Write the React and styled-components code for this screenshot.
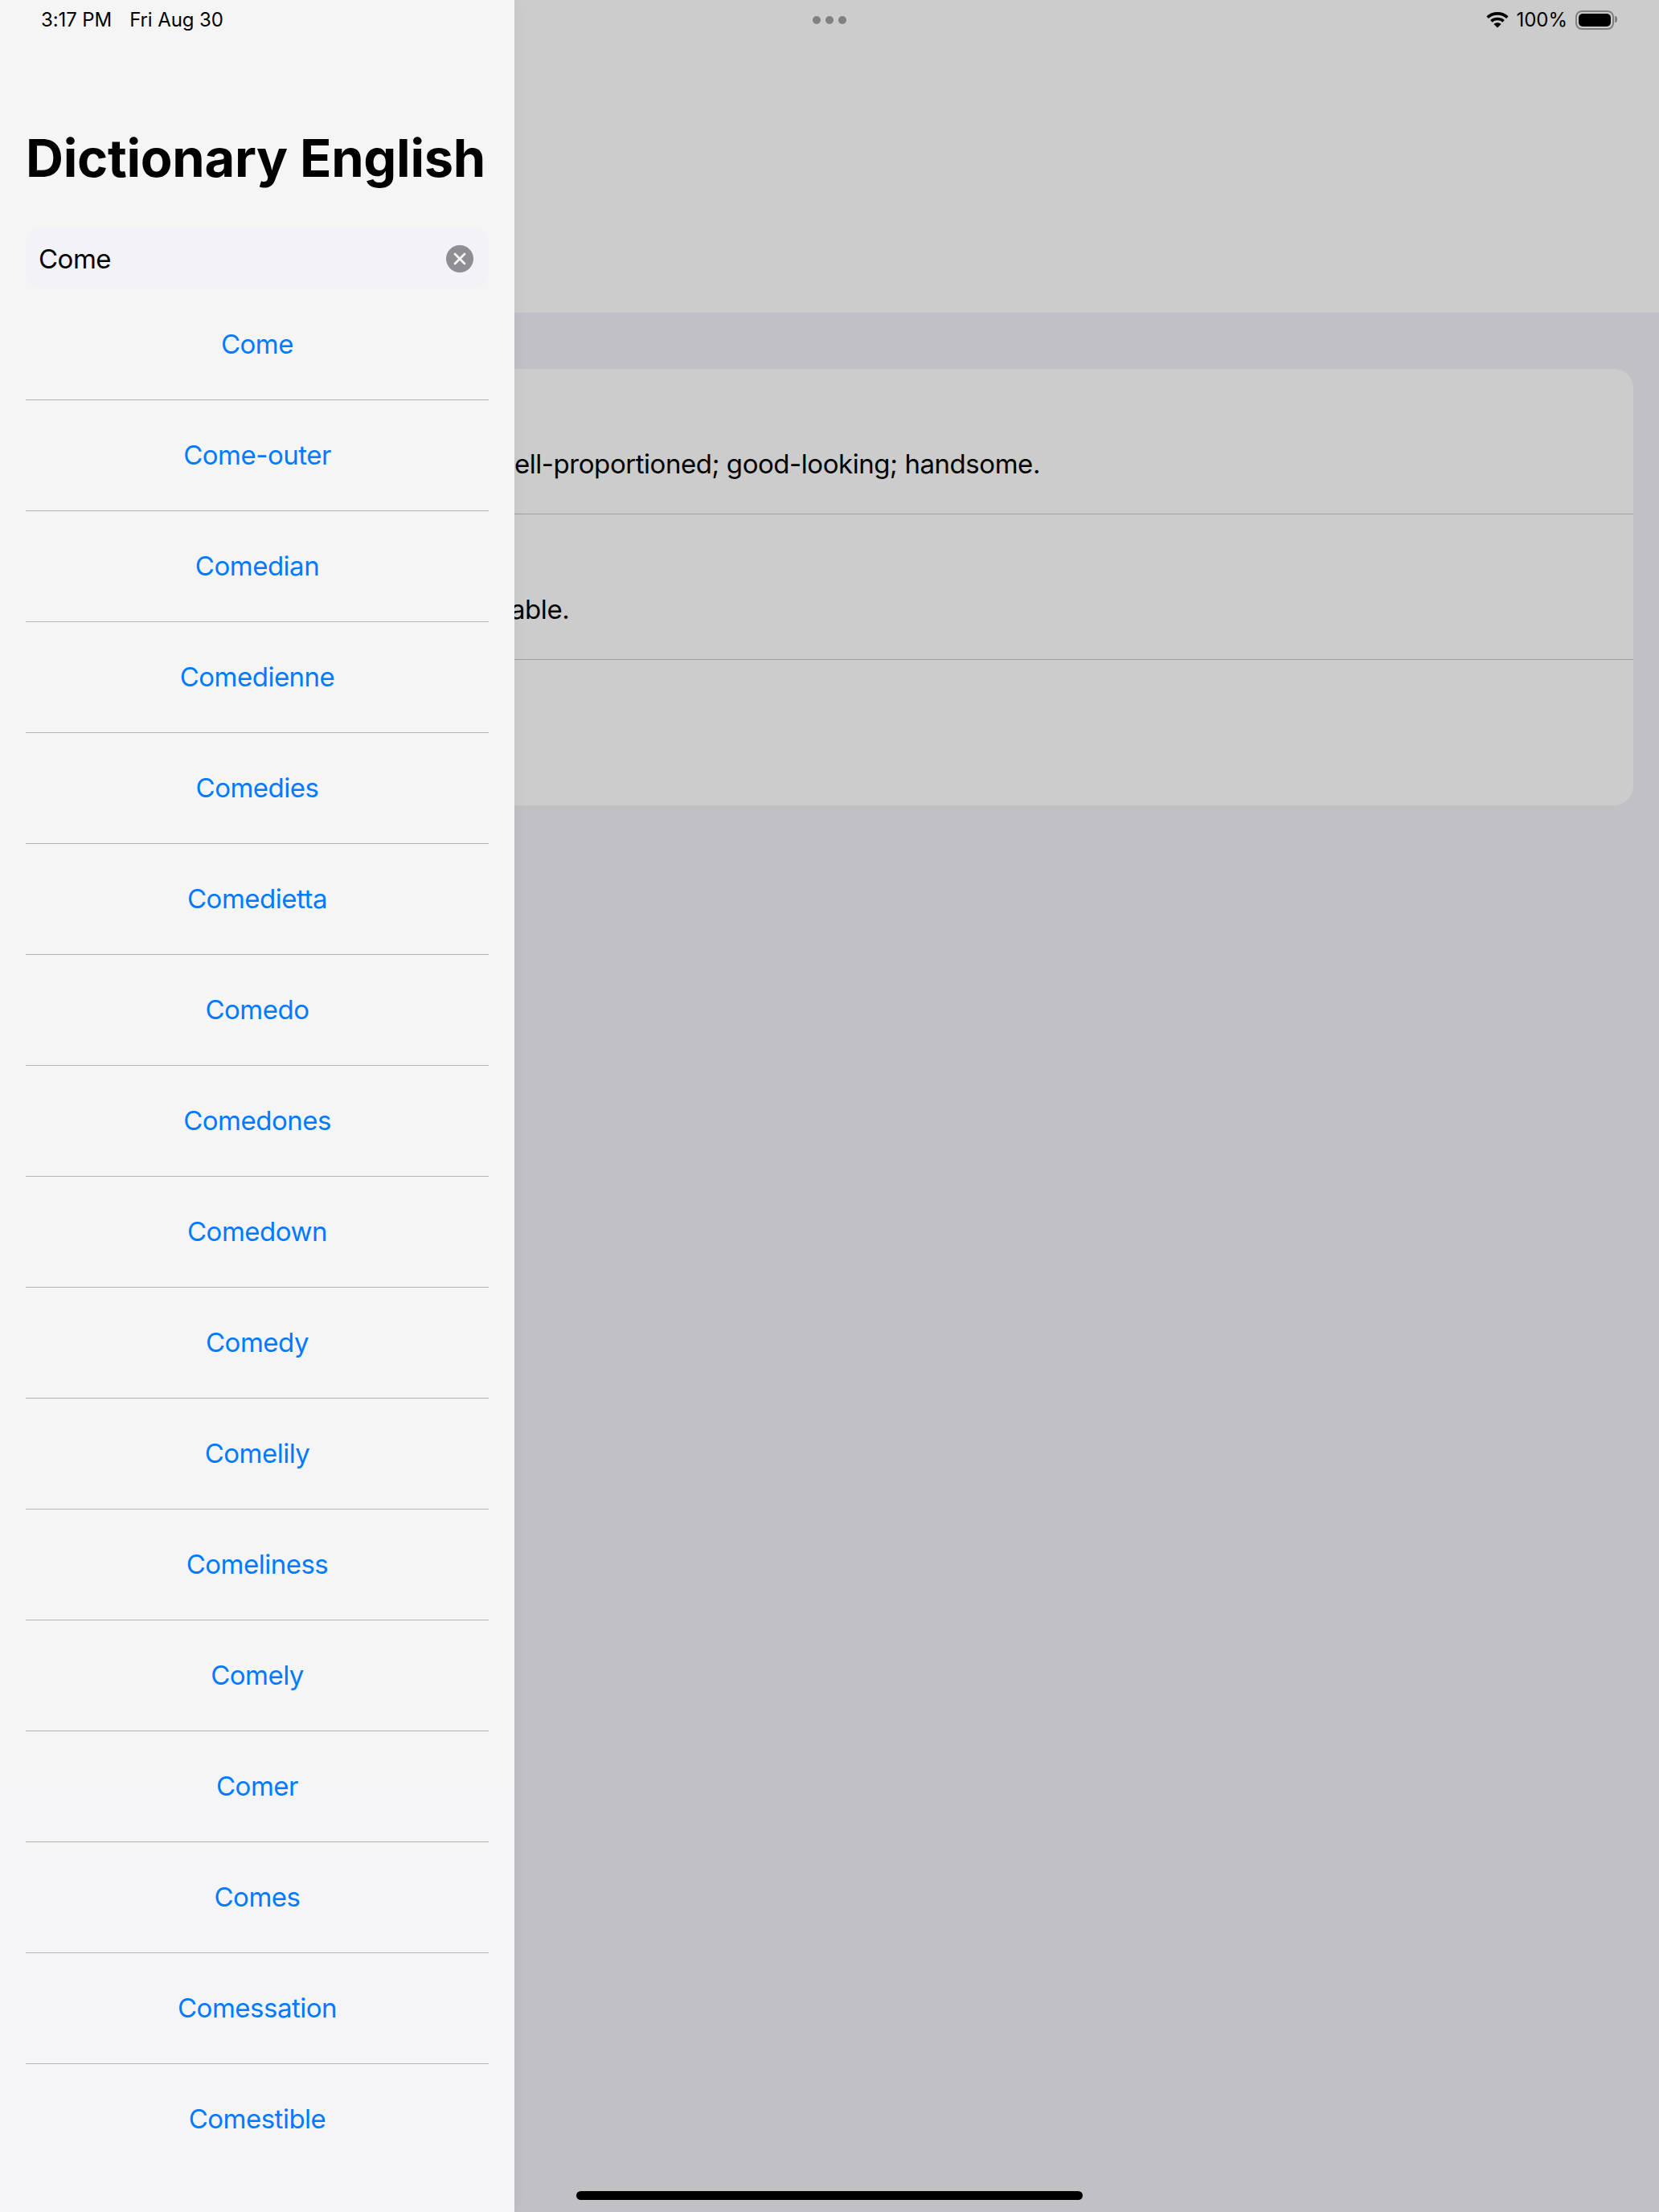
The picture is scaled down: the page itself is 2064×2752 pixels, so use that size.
import React from 'react'
import styled, { createGlobalStyle } from 'styled-components'

const words = [
  'Come', 'Come-outer', 'Comedian', 'Comedienne', 'Comedies', 'Comedietta', 'Comedo', 'Comedones',
  'Comedown', 'Comedy', 'Comelily', 'Comeliness', 'Comely', 'Comer', 'Comes', 'Comessation', 'Comestible'
]

const GlobalStyle = createGlobalStyle`
  html, body {
    margin: 0;
    padding: 0;
    background: #c1c0c5;
  }
  * {
    box-sizing: border-box;
  }
`

const Screen = styled.div`
  position: relative;
  display: flex;
  width: 2064px;
  height: 2752px;
  overflow: hidden;
  font-family: Inter, "Liberation Sans", sans-serif;
  color: #000;
  background: #c1c0c5;
`

const StatusBar = styled.div`
  position: absolute;
  top: 0;
  left: 0;
  right: 0;
  z-index: 2;
  height: 48px;
  padding: 1px 51px 0;
  display: grid;
  grid-template-columns: 1fr auto 1fr;
  align-items: center;
  font-size: 24px;
  line-height: 46px;
`

const Clock = styled.div`
  display: flex;
  gap: 22px;
  letter-spacing: -0.1px;
`

const Dots = styled.div`
  display: flex;
  gap: 6px;
`

const Dot = styled.span`
  width: 10px;
  height: 10px;
  border-radius: 50%;
  background: #808080;
`

const StatusRight = styled.div`
  display: flex;
  align-items: center;
  justify-content: flex-end;
`

const Percent = styled.span`
  margin: 0 10px 0 9px;
`

const Battery = styled.div`
  position: relative;
  width: 48px;
  height: 24px;
  margin-right: 5px;
  padding: 2px;
  border: 2px solid #7f7f7f;
  border-radius: 8px;

  &::before {
    content: '';
    display: block;
    height: 100%;
    background: #000;
    border-radius: 5px;
  }

  &::after {
    content: '';
    position: absolute;
    top: 5px;
    right: -6px;
    width: 3px;
    height: 8px;
    background: #7f7f7f;
    border-radius: 0 3px 3px 0;
  }
`

const Sidebar = styled.aside`
  position: relative;
  z-index: 1;
  flex: 0 0 640px;
  padding: 173px 32px 0;
  background: linear-gradient(180deg, #f5f5f5 0%, #f5f5f7 100%);
  box-shadow: 0 0 16px rgba(0, 0, 0, 0.05);
`

const Title = styled.h1`
  margin: 0 0 56px;
  height: 55px;
  font-size: 65px;
  line-height: 48px;
  font-weight: 700;
  letter-spacing: -0.3px;
  white-space: nowrap;
`

const SearchField = styled.div`
  height: 76px;
  padding: 0 19px 0 16px;
  display: flex;
  align-items: center;
  justify-content: space-between;
  background: #f2f2f7;
  border-radius: 20px;
  font-size: 33px;
  letter-spacing: -0.5px;
`

const ClearButton = styled.span`
  width: 34px;
  height: 34px;
  display: flex;
  align-items: center;
  justify-content: center;
  border-radius: 50%;
  background: #8e8e93;
`

const WordRow = styled.div`
  height: 138px;
  padding-bottom: 2px;
  display: flex;
  align-items: center;
  justify-content: center;
  border-bottom: ${props => (props.$last ? 'none' : '1px solid #b3b3b3')};
  color: #007aff;
  font-size: 33px;
  letter-spacing: -0.5px;
`

const Main = styled.main`
  flex: 1;
  min-width: 0;
`

const Header = styled.header`
  height: 389px;
  background: #cccccc;
`

const Card = styled.section`
  height: 543px;
  margin: 70px 32px 0 0;
  background: #cccccc;
  border-radius: 0 24px 24px 0;
`

const CardRow = styled.div`
  height: 181px;
  padding-top: 97px;
  border-bottom: ${props => (props.$last ? 'none' : '1px solid #a0a0a0')};
  font-size: 33px;
  letter-spacing: -0.45px;
  line-height: 42px;
  white-space: nowrap;
  text-indent: ${props => props.$indent || 0}px;
`

const HomeIndicator = styled.div`
  position: absolute;
  left: 717px;
  bottom: 15px;
  z-index: 2;
  width: 630px;
  height: 11px;
  border-radius: 6px;
  background: #000;
`

function WifiIcon() {
  return (
    <svg width="28" height="21" viewBox="0 0 28 21" fill="none" stroke="#000" strokeWidth="3.6">
      <path d="M1.6 7.6C8.4 1.3 19.6 1.3 26.4 7.6" />
      <path d="M6.4 12.4C10.6 8.6 17.4 8.6 21.6 12.4" />
      <path d="M14 20.6L9.4 15.9C12 13.6 16 13.6 18.6 15.9Z" fill="#000" stroke="none" />
    </svg>
  )
}

function ClearIcon() {
  return (
    <svg width="16" height="16" viewBox="0 0 16 16" stroke="#f5f5f5" strokeWidth="2.8" strokeLinecap="round">
      <path d="M2 2L14 14M14 2L2 14" />
    </svg>
  )
}

export default function App() {
  return (
    <Screen>
      <GlobalStyle />
      <StatusBar>
        <Clock>
          <span>3:17 PM</span>
          <span>Fri Aug 30</span>
        </Clock>
        <Dots>
          <Dot />
          <Dot />
          <Dot />
        </Dots>
        <StatusRight>
          <WifiIcon />
          <Percent>100%</Percent>
          <Battery />
        </StatusRight>
      </StatusBar>

      <Sidebar>
        <Title>Dictionary English</Title>
        <SearchField>
          <span>Come</span>
          <ClearButton>
            <ClearIcon />
          </ClearButton>
        </SearchField>
        {words.map((word, i) => (
          <WordRow key={word} $last={i === words.length - 1}>{word}</WordRow>
        ))}
      </Sidebar>

      <Main>
        <Header />
        <Card>
          <CardRow>ell-proportioned; good-looking; handsome.</CardRow>
          <CardRow $indent={-5}>able.</CardRow>
          <CardRow $last />
        </Card>
      </Main>

      <HomeIndicator />
    </Screen>
  )
}
